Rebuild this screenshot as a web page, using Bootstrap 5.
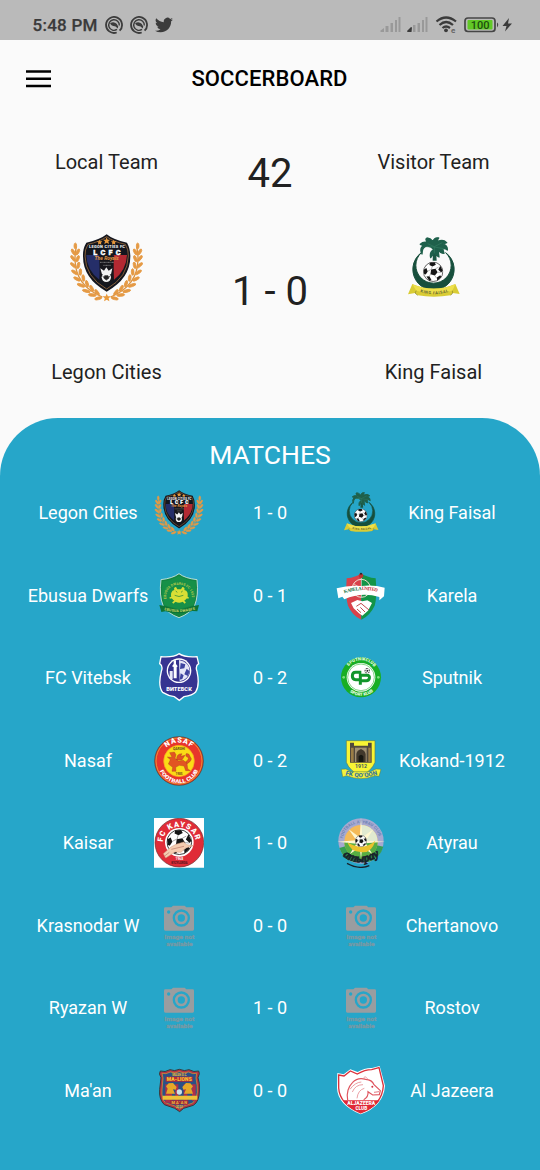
<!DOCTYPE html>
<html lang="en">
<head>
<meta charset="utf-8">
<meta name="viewport" content="width=device-width, initial-scale=1">
<title>Soccerboard</title>
<link href="https://cdn.jsdelivr.net/npm/bootstrap@5.3.0/dist/css/bootstrap.min.css" rel="stylesheet">
<style>
body{font-family:Roboto,"Liberation Sans",sans-serif;background:#fafafa;color:#212121;width:540px;height:1170px;overflow:hidden}
svg text{font-family:Roboto,"Liberation Sans",sans-serif}
.guide{fill:none;stroke:none}
.statusbar{height:40px;background:#bababa;color:#3a3a3a;padding:9px 26px 0 32.5px}
.clock{font-size:17px;font-weight:500;line-height:30px;letter-spacing:.25px;width:72.5px;white-space:nowrap;-webkit-text-stroke:.25px}
.topbar{height:77px;padding:0 25px}
.topbar h1{font-size:22px;font-weight:500;color:#000;line-height:26px;letter-spacing:.1px;padding-right:1px}
.menu-btn{width:27px;line-height:0}
.board{height:301px;padding:0 25px}
.side{width:163px;padding-top:31px}
.label-line{font-size:20px;line-height:29px;letter-spacing:.03px;white-space:nowrap}
.crest-lg{width:75px;height:75px;margin:54px 0 52px}
.mid{width:164px;padding-top:32px;font-size:40px;line-height:50px}
.mid .goals{margin-top:68px}
.matches{background:#26a6c9;color:#fff;border-radius:58px 58px 0 0;height:752px;padding:20px 24px 0}
.matches h2{font-size:26.5px;font-weight:400;line-height:34px;margin:0;letter-spacing:.05px}
.game{display:grid;grid-template-columns:128px 54px 128px 54px 128px;height:82.5px;align-items:center;justify-items:center;font-size:18px;white-space:nowrap}
.game span{margin-top:-1px}
.crest{width:50px;height:50px}
</style>
</head>
<body>
<svg width="0" height="0" class="position-absolute" aria-hidden="true">
<defs>
<symbol id="leaves" viewBox="28 19 225 225" overflow="visible">
<path d="M50 66Q28 175 128 217" fill="none" stroke="#dc9340" stroke-width="4"/>
<g fill="#e59a45" stroke="#e59a45" stroke-width="2.500">
<ellipse cx="47" cy="64" rx="4" ry="9"/><ellipse cx="41" cy="82" rx="4" ry="10" transform="rotate(-30 41 82)"/><ellipse cx="54" cy="82" rx="4" ry="10" transform="rotate(28 54 82)"/>
<ellipse cx="40" cy="101" rx="4" ry="10" transform="rotate(-38 40 101)"/><ellipse cx="54" cy="102" rx="4" ry="10" transform="rotate(22 54 102)"/>
<ellipse cx="41" cy="122" rx="4" ry="11" transform="rotate(-48 41 122)"/><ellipse cx="56" cy="122" rx="4" ry="10" transform="rotate(12 56 122)"/>
<ellipse cx="45" cy="143" rx="4" ry="11" transform="rotate(-56 45 143)"/><ellipse cx="62" cy="142" rx="4" ry="10" transform="rotate(2 62 142)"/>
<ellipse cx="52" cy="163" rx="4" ry="11" transform="rotate(-63 52 163)"/><ellipse cx="71" cy="160" rx="4" ry="10" transform="rotate(-8 71 160)"/>
<ellipse cx="64" cy="182" rx="4" ry="12" transform="rotate(-70 64 182)"/><ellipse cx="82" cy="177" rx="4" ry="10" transform="rotate(-18 82 177)"/>
<ellipse cx="80" cy="199" rx="4" ry="12" transform="rotate(-76 80 199)"/><ellipse cx="96" cy="191" rx="4" ry="10" transform="rotate(-28 96 191)"/>
<ellipse cx="98" cy="211" rx="4" ry="12" transform="rotate(-85 98 211)"/><ellipse cx="112" cy="203" rx="4" ry="10" transform="rotate(-38 112 203)"/>
<ellipse cx="116" cy="221" rx="4" ry="11" transform="rotate(75 116 221)"/>
</g></symbol>
<symbol id="ball" viewBox="0 0 60 60">
<circle cx="30" cy="30" r="28.500" fill="#fff" stroke="#222" stroke-width="2"/>
<path d="M24 23l13-2 6 10-8 10-13-4zM20 3l14-1 4 7-10 5-9-4zM51 12l7 14-4 6-9-8zM2 24l8-5 4 10-6 9-5-2zM10 44l9-1 6 11-6 3zM41 47l10-7 3 5-12 11z" fill="#161616"/>
<path d="M27 14l-2 9M37 21l9-5M43 31l10 1M35 41l6 9M22 37l-4 7M14 28l10-5" stroke="#777" stroke-width="1.500"/>
</symbol>
<symbol id="legon" viewBox="28 19 225 225">
<use href="#leaves" x="28" y="19" width="225" height="225"/>
<g transform="matrix(-1 0 0 1 281 0)"><use href="#leaves" x="28" y="19" width="225" height="225"/></g>
<path d="M141 29Q121 45 80 54Q69 72 70 95Q70 162 141 201Q212 162 212 95Q212 72 202 54Q160 45 141 29Z" fill="#14161e"/>
<path d="M141 36Q121 51 85 59Q75 75 76 94Q77 157 141 193Q205 157 206 94Q207 75 197 59Q160 51 141 36Z" fill="none" stroke="#b98045" stroke-width="2"/>
<path d="M80 91H122L119 165Q81 137 80 91Z" fill="#252e69"/><path d="M159 91H202Q200 137 163 165Z" fill="#b32932"/>
<path d="M118 92h45l-3 75-20 17-18-17z" fill="#17171c"/>
<g fill="#e99a3c"><path id="st" d="M141 38l3 7h8l-6 5 2 8-7-4-7 4 2-8-6-5h8z"/><path d="M120 45l2 5h6l-4 4 1 6-5-3-5 3 1-6-4-4h6zM162 45l2 5h6l-4 4 1 6-5-3-5 3 1-6-4-4h6z"/><use href="#st" transform="translate(-21 163) scale(1.150)"/></g>
<text x="142" y="71" text-anchor="middle" font-size="12" font-weight="900" textLength="108" fill="#eee">LEGON CITIES FC</text>
<text x="142" y="91" text-anchor="middle" font-size="22" font-weight="900" textLength="82" fill="#fff" stroke="#fff" stroke-width="1">LCFC</text>
<text x="141" y="106" text-anchor="middle" font-size="15" font-style="italic" font-weight="700" fill="#e39a45">The Royals</text>
<path d="M121 113h42M131 122h22" stroke="#aaa" stroke-width="2" stroke-dasharray="3 1"/>
<path d="M122 131l11 7 7-10 7 10 11-7-4 18h-27z" fill="#f2f2f2"/><circle cx="140" cy="158" r="14" fill="#f3f3f3"/><path d="M135 153h10l3 7-8 6-8-6zM128 153l4 4M152 153l-4 4" fill="#222" stroke="#222" stroke-width="2"/>
</symbol>
<symbol id="faisal" viewBox="2 18 225 225">
<path d="M78 83A62 62 0 1 0 151 83A53 53 0 1 1 78 83Z" fill="#174f3c" stroke="#174f3c" stroke-width="3"/>
<path d="M112 107l1-31h9l2 31z" fill="#1c5744"/>
<path d="M116 74Q103 60 91 64Q80 68 80 87Q72 73 83 61L75 58Q84 49 97 53Q88 42 95 39Q105 40 113 49Q118 36 130 39Q126 43 127 50Q143 42 154 53L144 57Q157 62 156 75Q149 69 142 71L146 85Q135 85 128 74L131 96Q120 91 118 82L106 98Q102 80 116 74Z" fill="#1e604b" stroke="#1e604b" stroke-width="4" stroke-linejoin="round"/>
<path d="M97 56l20 9 24-12M92 65l25 1 28 5M117 65v20" stroke="#337b62" stroke-width="2" fill="none"/>
<use href="#ball" x="83" y="110" width="61" height="61"/>
<path d="M51 177Q115 204 180 177L193 207L172 204L166 211Q115 219 67 211L59 204L38 208Z" fill="#d9cc35"/>
<path d="M51 178Q115 205 180 178L171 197Q115 213 63 197Z" fill="#eee04b"/><path d="M63 197L59 204 67 211M171 197l1 7-6 7" fill="none" stroke="#85802b" stroke-width="2"/>
<path id="kf" class="guide" d="M68 199Q115 216 166 199"/><text font-size="12" font-weight="700" fill="#5e612e"><textPath href="#kf" startOffset="7" textLength="86">KING FAISAL</textPath></text>
</symbol>
<symbol id="ebusua" viewBox="12 259 150 150">
<path d="M87 267Q68 281 33 285Q27 333 39 362Q53 387 87 399Q120 387 134 362Q146 333 141 285Q105 281 87 267Z" fill="#138442" stroke="#d8eadb" stroke-width="2.500"/>
<path d="M87 273Q68 286 37 290Q33 335 44 362L87 374L130 362Q141 332 137 290Q107 286 87 273Z" fill="#169048"/>
<path id="eb" class="guide" d="M49 346C38 285 134 285 125 346"/><text font-size="10.500" font-weight="700" fill="#b5c84b"><textPath href="#eb" startOffset="3">EBUSUA DWARFS FC 1932</textPath></text>
<path d="M64 339Q60 319 73 316Q70 308 78 307l4 7h11l4-7q9 1 6 9q13 3 10 22q-12 16-25 16t-24-15z" fill="#d8df36"/><path d="M65 326l8 7M109 326l-8 7M59 340l13-3M116 340l-12-3M68 355l9-7M106 355l-8-7" stroke="#d8df36" stroke-width="5"/><path d="M74 332q13 7 26 0M77 319l5 4M98 319l-5 4" fill="none" stroke="#147f39" stroke-width="2"/>
<path d="M28 361L44 364 87 377 130 364 147 361 142 380 127 379Q88 392 46 380L34 382Z" fill="#0d7436"/>
<path id="eb2" class="guide" d="M37 374Q87 390 140 374"/><text font-size="11" font-weight="700" fill="#ced765"><textPath href="#eb2" startOffset="6" textLength="94">EBUSUA DWARFS</textPath></text>
</symbol>
<symbol id="karela" viewBox="18 259 150 150">
<path d="M94 267Q78 277 50 281Q46 337 54 363Q67 393 94 405Z" fill="#d9424b"/>
<path d="M94 267Q110 277 137 281Q142 337 134 363Q120 393 94 405Z" fill="#139447"/>
<circle cx="94" cy="311" r="27" fill="none" stroke="#efddd0" stroke-width="3"/><path d="M94 280v57M70 297l48 29" stroke="#f0e8da" stroke-width="2"/>
<circle cx="93" cy="273" r="7" fill="#bd3430"/><circle cx="93" cy="267" r="3" fill="#222"/>
<path d="M20 311Q57 300 94 304Q131 300 164 309L162 335L148 347V337Q94 321 43 344L37 336 25 341Z" fill="#fff"/>
<path id="ka" class="guide" d="M43 326Q93 309 146 322"/><text style="font-family:'Liberation Serif',serif" font-size="14.500" font-weight="700" fill="#147246"><textPath href="#ka" textLength="101">KARELA <tspan fill="#c52f39">UNITED</tspan></textPath></text>
<path d="M63 355l19-9 15 4 15-3 14 8-12 23-17 15-10-7-16-15z" fill="#fff"/><path d="M79 365l14-9 24 20M81 373l12 11M91 368l14 14" stroke="#c34a4d" stroke-width="3" fill="none"/>
</symbol>
<symbol id="vitebsk" viewBox="12 15 150 150">
<path d="M87 17Q71 29 33 26L29 47Q40 54 34 70Q23 114 38 133Q56 144 73 146L88 157L102 146Q128 142 137 132Q150 111 141 70Q135 54 146 47L141 26Q104 29 87 17Z" fill="#363491" stroke="#fff" stroke-width="4"/>
<circle cx="87" cy="68" r="37" fill="#fff"/><circle cx="87" cy="68" r="33" fill="#34318e"/>
<path d="M71 91V57l-5-2 5-7V37h7v11l5 7-3 3v33z" fill="#fff"/><path d="M59 69h9v24h-9zM87 36Q119 43 119 69Q116 94 89 100Z" fill="#e5e7f8"/><path d="M92 45l14 4-3 12-13 2zM110 62l9 8-5 14-11-5zM92 76l9 6-4 11-8 2z" fill="#3e44a0"/>
<text x="87" y="129" text-anchor="middle" font-size="17" font-weight="900" textLength="77" fill="#fff">ВИТЕБСК</text>
</symbol>
<symbol id="nasaf" viewBox="12 262 150 150">
<circle cx="87" cy="337" r="73" fill="#e7352b" stroke="#5a3d22" stroke-width="2"/><circle cx="87" cy="337" r="69" fill="none" stroke="#f3bd36" stroke-width="2"/>
<ellipse cx="87" cy="337" rx="46" ry="47" fill="#fbdc16" stroke="#f69a25" stroke-width="2"/>
<path id="na1" class="guide" d="M46 299Q87 264 128 299"/><path id="na2" class="guide" d="M28 363C50 417 125 417 146 363"/>
<text font-size="22" font-weight="900" fill="#fff"><textPath href="#na1" startOffset="4" textLength="82">NASAF</textPath></text><text font-size="16" font-weight="900" fill="#fff"><textPath href="#na2" startOffset="4" textLength="145" lengthAdjust="spacingAndGlyphs">FOOTBALL CLUB</textPath></text>
<text x="87" y="304" text-anchor="middle" font-size="10" font-weight="700" fill="#59451b">QARSHI</text>
<path d="M55 346L61 333 52 325 66 326 59 312 73 310 78 318 75 329 86 337 100 335 111 344 113 360 121 366H107L102 352 88 350 77 356 78 368H66L68 356ZM80 334Q78 315 96 315L92 323 105 320 96 334ZM107 339Q123 329 108 323Q105 310 117 317L121 325Q130 333 112 345Z" fill="#e25422" stroke="#9f371c"/>
<text x="87" y="380" text-anchor="middle" font-size="9" font-weight="700" fill="#713d19">1985</text>
</symbol>
<symbol id="sputnik" viewBox="18 15 150 150">
<circle cx="93" cy="88" r="60" fill="#18ae25"/><circle cx="93" cy="88" r="43" fill="#fff"/><circle cx="93" cy="88" r="40" fill="none" stroke="#44bd4b" stroke-width="2"/>
<path id="sp1" class="guide" d="M49 70C59 26 127 26 137 70"/><path id="sp2" class="guide" d="M43 111C61 154 126 154 144 111"/>
<text font-size="13" font-weight="900" fill="#e8ffe7"><textPath href="#sp1" startOffset="17" textLength="88">SPUTNIKCLUB</textPath></text><text font-size="13" font-weight="900" fill="#e8ffe7"><textPath href="#sp2" startOffset="27" textLength="76">SPORT KLUB</textPath></text>
<path d="M94 73H77Q67 73 67 84T77 95H92M91 110V82H111Q120 82 118 91Q117 98 109 98H91" fill="none" stroke="#12952b" stroke-width="9"/><use href="#ball" x="103" y="60" width="17" height="17"/><circle cx="41" cy="88" r="4" fill="#7fde80"/><circle cx="145" cy="88" r="4" fill="#7fde80"/>
</symbol>
<symbol id="kokand" viewBox="18 262 150 150">
<path d="M49 276H135V341Q126 365 93 383Q58 366 49 341Z" fill="#f8f434" stroke="#5f7f55" stroke-width="2"/>
<path d="M60 282h12v9h42v-9h11v60H60z" fill="#51483c"/><path d="M63 297h8v43h-8zM115 297h7v43h-7z" fill="#9b7d46"/><path d="M75 297h35v43H75z" fill="#a29072"/><path d="M79 340V316Q80 306 93 301Q105 306 107 316V340Z" fill="#41382c"/><path d="M86 340v-17q7-10 14 0v17z" fill="#171711"/>
<text x="93" y="357" text-anchor="middle" font-size="16" font-weight="700" textLength="36" fill="#445b61">1912</text>
<path d="M34 362L48 361 63 369H122L138 361 153 362 147 383 136 381Q93 399 50 381L38 385Z" fill="#f4f23a" stroke="#567b43" stroke-width="1.500"/>
<path id="ko" class="guide" d="M43 377Q93 394 145 377"/><text font-size="18" font-weight="900" fill="#3b7796"><textPath href="#ko" startOffset="3" textLength="98" lengthAdjust="spacingAndGlyphs">FK QO‘QON</textPath></text>
</symbol>
<symbol id="kaysar" viewBox="12 18 150 150">
<path d="M12 18h150v149H12z" fill="#fff"/><circle cx="88" cy="92" r="73" fill="#e02c37" stroke="#682a2e" stroke-width="2"/><circle cx="88" cy="91" r="43" fill="#fff"/>
<path id="ky" class="guide" d="M39 92C38 29 137 29 137 92"/><text font-size="23" font-weight="900" fill="#fff"><textPath href="#ky" startOffset="2" textLength="143">FC KAYSAR</textPath></text>
<use href="#ball" x="49" y="51" width="78" height="79"/>
<path d="M40 125L63 105 78 97 101 90 110 98 130 101 107 108 93 121 75 120 47 138Z" fill="#f5cdb1" stroke="#cb947b" stroke-width="1.500"/><path d="M44 132l14-11M64 112l38-9" stroke="#ba7567" stroke-width="2"/>
<text x="88" y="144" text-anchor="middle" font-size="10" font-weight="700" fill="#fff">1968</text><text x="88" y="157" text-anchor="middle" font-size="11" font-weight="900" textLength="49" lengthAdjust="spacingAndGlyphs" fill="#5b151d">KYZYLORDA</text>
</symbol>
<symbol id="noimage" viewBox="12 265 150 150">
<path fill-rule="evenodd" fill="#999da0" d="M46 284H64L69 279H104L109 284H128Q132 284 132 288V350Q132 354 128 354H46Q42 354 42 350V288Q42 284 46 284ZM94 290A26 26 0 1 0 94 342A26 26 0 1 0 94 290ZM56 293A5 5 0 1 0 56 303A5 5 0 1 0 56 293Z"/><circle cx="94" cy="316" r="15" fill="none" stroke="#999da0" stroke-width="8"/>
<g fill="#7899a5" stroke="#7899a5" stroke-width=".8"><text x="88" y="380" text-anchor="middle" font-size="17" font-weight="700" textLength="90" lengthAdjust="spacingAndGlyphs">Image not</text><text x="88" y="401" text-anchor="middle" font-size="17" font-weight="700" textLength="79" lengthAdjust="spacingAndGlyphs">available</text></g>
</symbol>
<symbol id="atyrau" viewBox="18 18 150 150">
<circle cx="93" cy="87" r="68" fill="#a7a9d0"/><path d="M93 89L28 108A68 68 0 0 0 70 150H116A68 68 0 0 0 160 104Z" fill="#359d53"/><circle cx="93" cy="89" r="50" fill="#f4ba58"/><path d="M93 39A50 50 0 0 1 143 89H93Z" fill="#e1ead0"/><path d="M43 90A50 50 0 0 0 143 90Z" fill="#57ae43"/>
<path id="at" class="guide" d="M38 84C42 17 144 17 148 84"/><text font-size="12" font-weight="700" fill="#6a83b3"><textPath href="#at" startOffset="4" textLength="150">FOOTBALL ATYRAU CLUB</textPath></text>
<path d="M93 17L97 76 130 52 107 86 165 89 107 94 127 126 97 106 93 140 89 106 59 127 79 95 22 89 79 85 56 52 89 76Z" fill="#fff7d0"/>
<path d="M52 91Q72 102 86 104Q117 105 136 86Q124 126 92 120Q62 120 52 91Z" fill="#ebc22d"/><use href="#ball" x="75" y="69" width="36" height="36"/>
<path id="at2" class="guide" d="M38 132Q88 171 154 128"/><text style="font-family:'Liberation Serif',serif" font-size="35" font-weight="700" font-style="italic" stroke="#17212a" stroke-width="2" fill="#17212a"><textPath href="#at2" textLength="120">атырау</textPath></text><path d="M51 154Q87 174 118 161" fill="none" stroke="#17212a" stroke-width="4"/>
</symbol>
<symbol id="maan" viewBox="12 16 150 150">
<path d="M31 31Q45 36 60 27Q73 33 88 26Q104 33 117 27Q132 36 146 31Q151 37 144 51Q150 66 148 91Q148 123 130 134L101 143 89 153 74 143 43 132Q26 116 29 86L33 51Q25 39 31 31Z" fill="#b73244" stroke="#353b3c" stroke-width="3"/>
<path d="M36 38Q48 42 61 34Q75 40 88 33Q103 40 116 34Q129 42 140 38L138 52Q143 75 142 95Q141 116 128 127L101 136 89 145 75 136 46 126Q34 114 36 88L39 52Z" fill="#295187" stroke="#d3a334" stroke-width="2"/>
<path d="M46 71h20v55H46zM76 71h9v63h-9zM101 71h11v62h-11zM126 71h11v49h-11z" fill="#ae304a"/>
<rect x="47" y="48" width="81" height="15" fill="#ba2737"/><text x="88" y="46" text-anchor="middle" font-size="9" font-weight="700" fill="#f1bd35">MA'AN S.C</text><text x="88" y="61" text-anchor="middle" font-size="15" font-weight="900" textLength="75" fill="#f4ca33">MA-LIONS</text>
<path id="lion" d="M48 99L53 84 48 77 56 68 69 67 80 79 77 87 69 86 75 99Z" fill="#e6a827"/><use href="#lion" transform="matrix(-1 0 0 1 177 0)"/><circle cx="88" cy="94" r="8" fill="#cce1e5"/>
<path d="M38 105H142V117H38Z" fill="#edc238"/><rect x="60" y="119" width="55" height="12" fill="#a62739"/><text x="88" y="130" text-anchor="middle" font-size="12" font-weight="700" textLength="47" fill="#eabf3d">MA'AN</text><text x="88" y="141" text-anchor="middle" font-size="9" font-weight="700" fill="#eabf3d">2020</text>
</symbol>
<symbol id="jazeera" viewBox="18 16 150 150">
<path d="M22 37L41 41 61 26 83 34Q105 21 126 22L149 16L165 75Q161 136 92 161Q23 133 21 82Z" fill="#fff"/>
<path d="M26 43L42 46 61 31 82 40Q105 27 125 27L147 21L160 75Q157 132 92 157Q29 130 26 82Z" fill="#fff" stroke="#db303a" stroke-width="4"/>
<path d="M38 119H149Q133 143 92 157Q55 143 38 119Z" fill="#df2936"/>
<path d="M53 118Q47 86 68 65Q83 49 107 56Q126 57 132 72L151 90 148 102 128 103 114 93Q116 109 101 117" fill="none" stroke="#df555f" stroke-width="3.500"/><path d="M104 56Q98 49 107 49L117 59M99 72Q76 72 67 94M103 83Q84 88 81 113M60 86Q75 65 94 64" fill="none" stroke="#e68c92" stroke-width="2.500"/><circle cx="127" cy="78" r="3" fill="#d33343"/><path d="M132 95l15-2" stroke="#d33343" stroke-width="2"/>
<text x="94" y="133" text-anchor="middle" font-size="14" font-weight="900" textLength="84" lengthAdjust="spacingAndGlyphs" fill="#fff">ALJAZEERA</text><text x="94" y="149" text-anchor="middle" font-size="14" font-weight="900" fill="#fff">CLUB</text>
</symbol>
<symbol id="swirl" viewBox="0 0 18 18"><path d="M14.600 14.700A8 8 0 1 0 11.700 16.500" fill="none" stroke="#3c3c3c" stroke-width="1.800"/><path d="M12 13.400A5.300 5.300 0 1 1 14.300 9.500" fill="none" stroke="#3c3c3c" stroke-width="1.400"/><path d="M5 7.400Q8.500 4.800 11.600 7.800L13.300 10.500 12.600 12.500Q10.600 9.900 8.200 10.100Q6.500 9.500 5 7.400Z" fill="#3c3c3c"/></symbol>
</defs>
</svg>

<header>
<div class="statusbar d-flex align-items-center">
<span class="clock">5:48 PM</span>
<svg width="18" height="18"><use href="#swirl"/></svg>
<svg width="18" height="18" class="swirl-gap" style="margin-left:7px"><use href="#swirl"/></svg>
<svg width="18" height="18" viewBox="0 0 24 24" style="margin-left:7px"><path fill="#3b3b3b" d="M24 4.600a10 10 0 0 1-2.800.8 5 5 0 0 0 2.100-2.700c-1 .6-2 1-3.100 1.200a4.900 4.900 0 0 0-8.400 4.500C7.700 8.100 4.100 6.100 1.700 3.100a4.900 4.900 0 0 0 1.500 6.600 4.900 4.900 0 0 1-2.200-.6 4.900 4.900 0 0 0 3.900 4.900 5 5 0 0 1-2.200.1 4.900 4.900 0 0 0 4.600 3.400A9.900 9.900 0 0 1 0 19.500a14 14 0 0 0 7.500 2.200c9.100 0 14.300-7.700 14-14.600A10 10 0 0 0 24 4.600z"/></svg>
<svg class="ms-auto" width="135" height="24" viewBox="379 13 135 24">
<g fill="#999"><path d="M380 31l4-3v4h-3zM385.500 26h3v6h-3zM390.500 23h2.500v9h-2.500zM395 20h2v12h-2zM398.500 17h2v15h-2zM413 25h2.500v7h-2.500zM417.500 23h2.500v9h-2.500zM422 20h2v12h-2zM425.500 17h2v15h-2z"/></g><path d="M407 31l4-4 1 .5-.5 4.500h-4z" fill="#3b3b3b"/>
<g fill="none" stroke="#3b3b3b" stroke-width="2.200"><path d="M436.500 21.500Q446 13.500 456 21.500M439.500 25Q446 19 453 25M442.500 28Q446 25 450 28"/></g><circle cx="446" cy="30.300" r="1.900" fill="#3b3b3b"/><text x="451" y="33" font-size="8" font-weight="700" fill="#666">e</text>
<rect x="465" y="18" width="30" height="13.500" rx="3" fill="#bababa" stroke="#464646" stroke-width="1.700"/><rect x="467.500" y="20" width="25" height="9.500" rx="1" fill="#61c926"/><path d="M497 22.500q2.500 2 0 5z" fill="#444"/><text x="480.200" y="29" text-anchor="middle" font-size="11" font-weight="500" fill="#1c4d0e">100</text>
<path d="M509 18l-6.500 8h4L505 31.500l7-8h-4z" fill="#3b3b3b"/></svg>
</div>
<div class="topbar d-flex align-items-center">
<div class="menu-btn"><svg width="27" height="18" viewBox="0 0 27 18"><path d="M1 1.600h25M1 8.800h25M1 16h25" stroke="#000" stroke-width="2.500"/></svg></div>
<h1 class="flex-grow-1 text-center m-0">SOCCERBOARD</h1>
<div class="menu-btn"></div>
</div>
</header>

<main>
<section class="board d-flex justify-content-between text-center">
<div class="side"><div class="label-line">Local Team</div><svg class="crest-lg"><use href="#legon"/></svg><div class="label-line">Legon Cities</div></div>
<div class="mid"><div>42</div><div class="goals">1 - 0</div></div>
<div class="side"><div class="label-line">Visitor Team</div><svg class="crest-lg"><use href="#faisal"/></svg><div class="label-line">King Faisal</div></div>
</section>
<section class="matches">
<h2 class="text-center">MATCHES</h2>
<div class="game"><span>Legon Cities</span><svg class="crest"><use href="#legon"/></svg><span>1 - 0</span><svg class="crest"><use href="#faisal"/></svg><span>King Faisal</span></div>
<div class="game"><span>Ebusua Dwarfs</span><svg class="crest"><use href="#ebusua"/></svg><span>0 - 1</span><svg class="crest"><use href="#karela"/></svg><span>Karela</span></div>
<div class="game"><span>FC Vitebsk</span><svg class="crest"><use href="#vitebsk"/></svg><span>0 - 2</span><svg class="crest"><use href="#sputnik"/></svg><span>Sputnik</span></div>
<div class="game"><span>Nasaf</span><svg class="crest"><use href="#nasaf"/></svg><span>0 - 2</span><svg class="crest"><use href="#kokand"/></svg><span>Kokand-1912</span></div>
<div class="game"><span>Kaisar</span><svg class="crest"><use href="#kaysar"/></svg><span>1 - 0</span><svg class="crest"><use href="#atyrau"/></svg><span>Atyrau</span></div>
<div class="game"><span>Krasnodar W</span><svg class="crest"><use href="#noimage"/></svg><span>0 - 0</span><svg class="crest"><use href="#noimage"/></svg><span>Chertanovo</span></div>
<div class="game"><span>Ryazan W</span><svg class="crest"><use href="#noimage"/></svg><span>1 - 0</span><svg class="crest"><use href="#noimage"/></svg><span>Rostov</span></div>
<div class="game"><span>Ma'an</span><svg class="crest"><use href="#maan"/></svg><span>0 - 0</span><svg class="crest"><use href="#jazeera"/></svg><span>Al Jazeera</span></div>
</section>
</main>
<script src="https://cdn.jsdelivr.net/npm/bootstrap@5.3.0/dist/js/bootstrap.bundle.min.js"></script>
</body>
</html>
